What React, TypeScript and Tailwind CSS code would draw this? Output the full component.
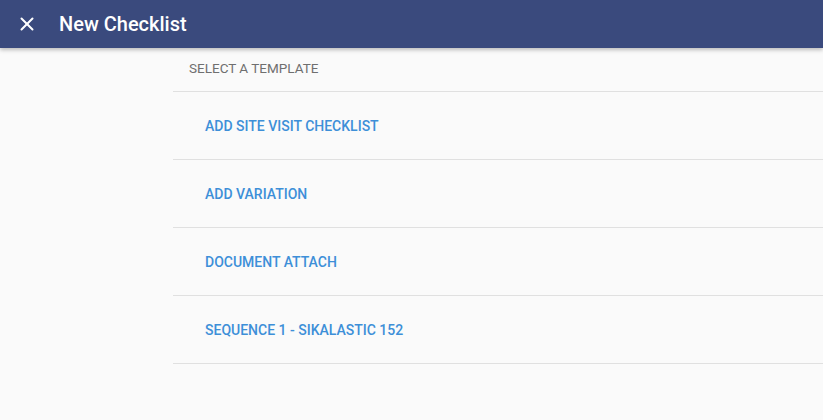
import { X } from 'lucide-react'

const templates = [
  'ADD SITE VISIT CHECKLIST',
  'ADD VARIATION',
  'DOCUMENT ATTACH',
  'SEQUENCE 1 - SIKALASTIC 152',
]

export default function App() {
  return (
    <div className="min-h-[420px] bg-[#fafafa] font-['Roboto',sans-serif]">
      <header className="relative z-10 flex h-12 items-center bg-[#3a4a7d] shadow-[0_2px_4px_rgba(0,0,0,0.25)]">
        <button className="ml-[15px] flex h-6 w-6 items-center justify-center text-white">
          <X className="h-[22px] w-[22px]" strokeWidth={2.2} />
        </button>
        <h1 className="ml-[20px] text-[20px] font-medium text-white">New Checklist</h1>
      </header>

      <div className="ml-[173px]">
        <div className="flex h-[44px] items-center border-b border-[#e0e0e0] pb-[2px] pl-4 text-[13.5px] text-[#6f6f6f]">
          SELECT A TEMPLATE
        </div>
        {templates.map((t) => (
          <div
            key={t}
            className="flex h-[68px] items-center border-b border-[#e0e0e0] pl-8 pt-[1px] text-[14px] font-medium text-[#3d8fd8]"
          >
            {t}
          </div>
        ))}
      </div>
    </div>
  )
}
